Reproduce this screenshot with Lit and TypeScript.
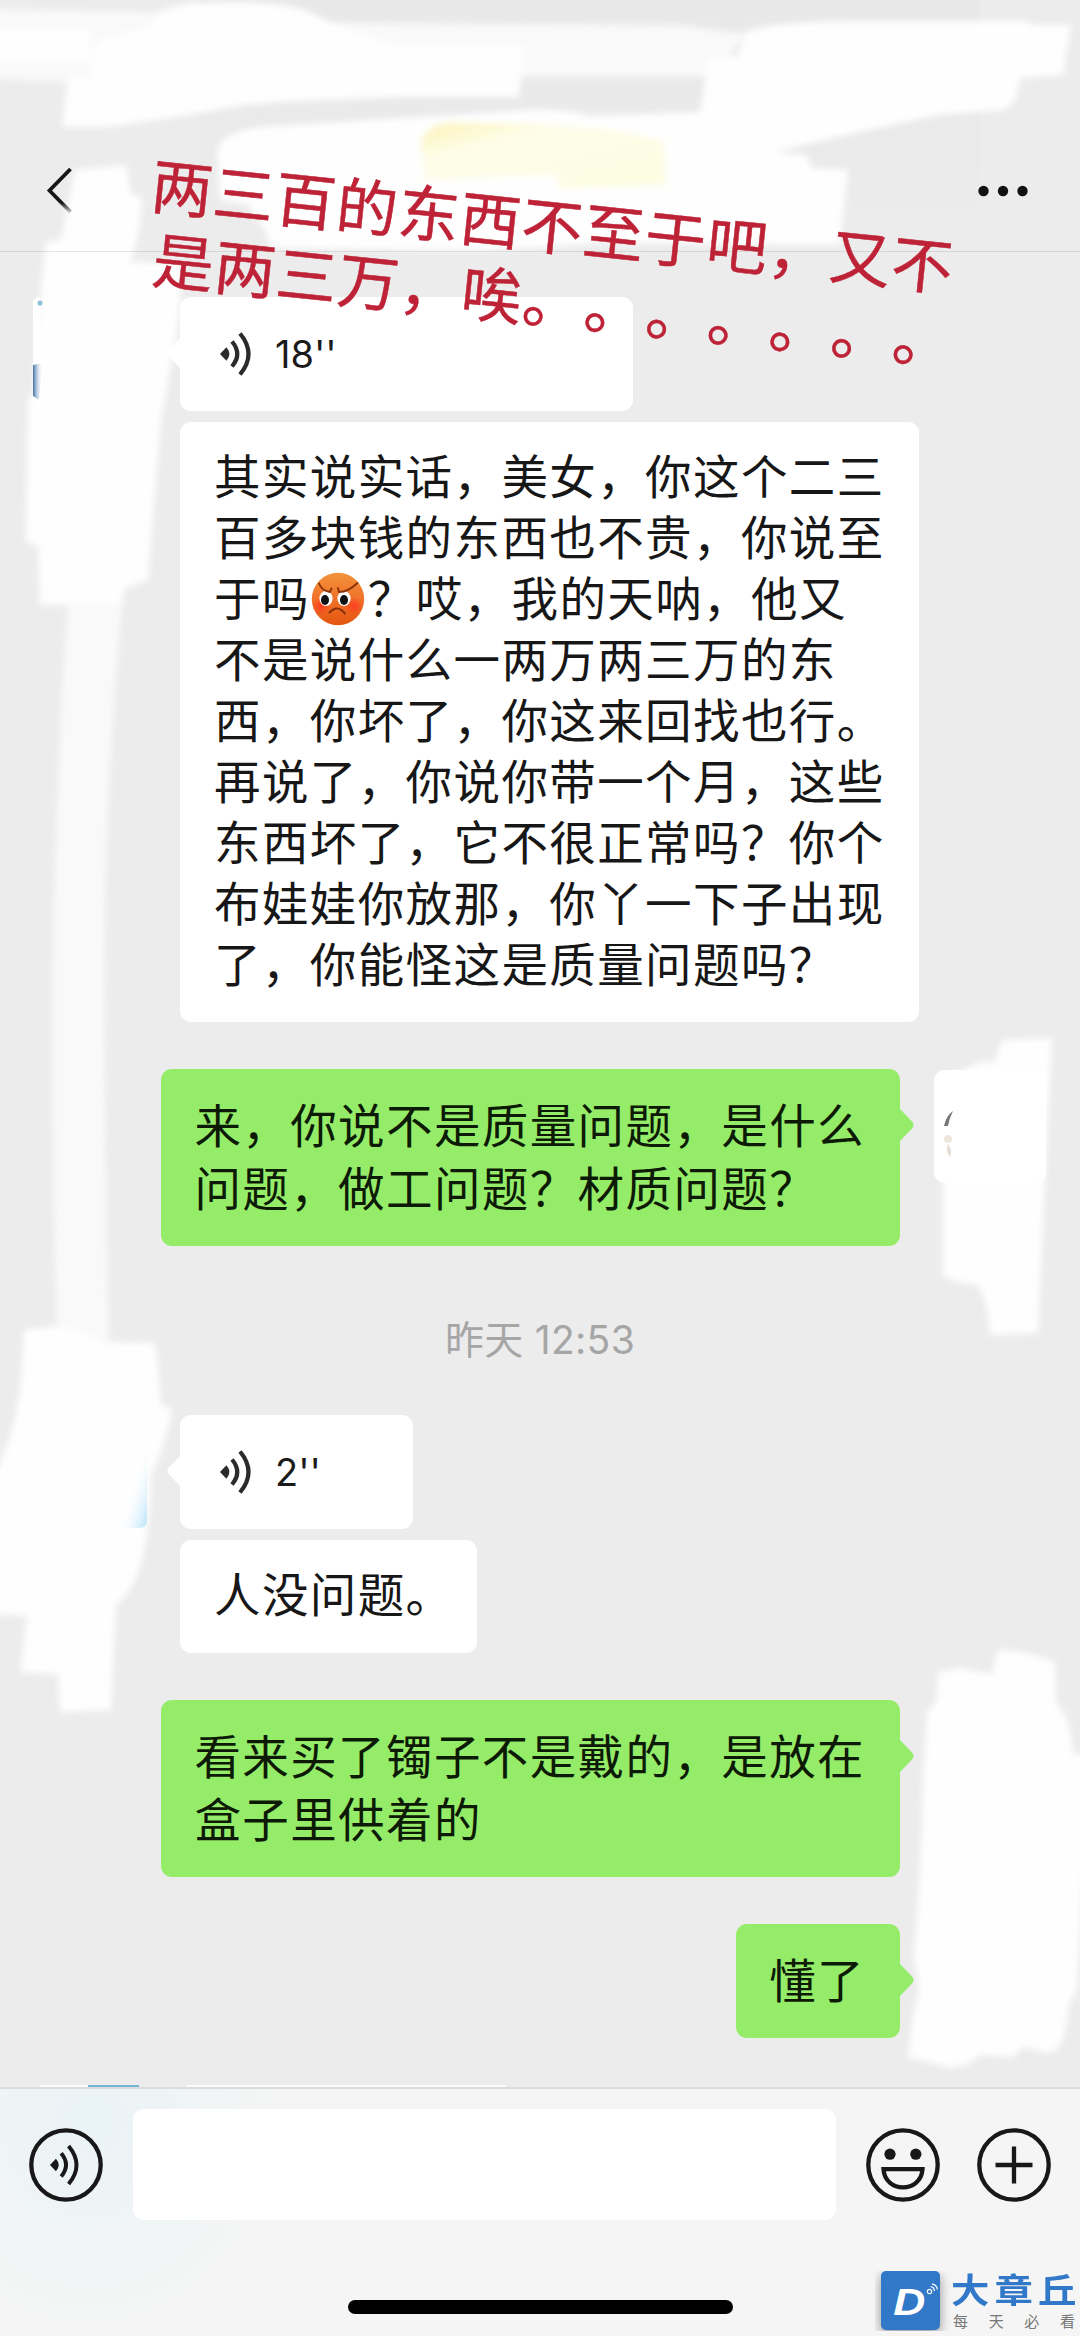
import { LitElement, html, css, svg, nothing } from "lit";
import { customElement, property } from "lit/decorators.js";

type Message =
  | { kind: "voice"; seconds: string; width: number; gap: number }
  | { kind: "text"; side: "in" | "out"; lines: string[]; gap: number; lead: number; tail?: boolean; avatar?: boolean; compact?: boolean }
  | { kind: "time"; label: string; gap: number };

const MESSAGES: Message[] = [
  { kind: "voice", seconds: "18''", width: 453, gap: 45 },
  {
    kind: "text", side: "in", gap: 11, lead: 61,
    lines: [
      "其实说实话，美女，你这个二三",
      "百多块钱的东西也不贵，你说至",
      "于吗[怒]？哎，我的天呐，他又",
      "不是说什么一两万两三万的东",
      "西，你坏了，你这来回找也行。",
      "再说了，你说你带一个月，这些",
      "东西坏了，它不很正常吗？你个",
      "布娃娃你放那，你丫一下子出现",
      "了，你能怪这是质量问题吗？",
    ],
  },
  { kind: "text", side: "out", gap: 47, lead: 63, tail: true, avatar: true, lines: ["来，你说不是质量问题，是什么", "问题，做工问题？材质问题？"] },
  { kind: "time", label: "昨天 12:53", gap: 62 },
  { kind: "voice", seconds: "2''", width: 233, gap: 43 },
  { kind: "text", side: "in", gap: 11, lead: 62, compact: true, lines: ["人没问题。"] },
  { kind: "text", side: "out", gap: 47, lead: 63, tail: true, lines: ["看来买了镯子不是戴的，是放在", "盒子里供着的"] },
  { kind: "text", side: "out", gap: 47, lead: 63, tail: true, lines: ["懂了"] },
];

const waves = svg`
  <path d="M0 22 L6.4 15.2 Q12.4 22 6.4 28.8 Z" fill="currentColor"/>
  <path d="M12 9.5 Q22.5 22 12 34.5" fill="none" stroke="currentColor" stroke-width="4.2"/>
  <path d="M20 1.5 Q37 22 20 42.5" fill="none" stroke="currentColor" stroke-width="4.2"/>`;

@customElement("angry-face")
class AngryFace extends LitElement {
  static styles = css`
    :host { display: inline-block; width: 58px; height: 54px; vertical-align: -10px; }
    svg { display: block; margin-left: 1px; }
  `;
  render() {
    return html`<svg width="54" height="54" viewBox="0 0 54 54">
      <defs>
        <linearGradient id="skin" x1="0" y1="0" x2="0" y2="1">
          <stop offset="0" stop-color="#f3923a"/><stop offset=".5" stop-color="#f0722a"/><stop offset="1" stop-color="#e4560f"/>
        </linearGradient>
        <radialGradient id="blush"><stop offset="0" stop-color="#ff3d22"/><stop offset="1" stop-color="#ff3d22" stop-opacity="0"/></radialGradient>
      </defs>
      <circle cx="27" cy="27" r="26.2" fill="url(#skin)"/>
      <circle cx="10" cy="34" r="9" fill="url(#blush)"/>
      <circle cx="43" cy="34" r="9" fill="url(#blush)"/>
      <ellipse cx="15" cy="26.5" rx="6.6" ry="7.6" fill="#fff"/>
      <ellipse cx="33" cy="26.5" rx="6.6" ry="7.6" fill="#fff"/>
      <ellipse cx="14" cy="28" rx="4" ry="5" fill="#111"/>
      <ellipse cx="33" cy="28" rx="4" ry="5" fill="#111"/>
      <path d="M8 11.5 Q11 19 19 20 M46.500 11 Q37 20 28 20 M19 20 L20.500 16.500 M28 20 L27 16" fill="none" stroke="#8a3207" stroke-width="1.900" stroke-linecap="round"/>
      <path d="M18.500 40.500 Q26 32 34 41.500" fill="none" stroke="#8a3207" stroke-width="2" stroke-linecap="round"/>
    </svg>`;
  }
}

@customElement("chat-message")
class ChatMessage extends LitElement {
  @property({ attribute: false }) data!: Message;

  static styles = css`
    :host { display: block; }
    .row { display: flex; padding: 0 34px 0 180px; }
    .row.out { justify-content: flex-end; align-items: flex-start; padding: 0 180px 0 34px; }
    .bubble { position: relative; box-sizing: border-box; flex: none; border-radius: 11px; background: #fff; color: #171717; }
    .row.out .bubble { background: #95ec69; color: #0c1a06; }
    .text { padding: 21px 34px 30px; font-size: 46.5px; letter-spacing: 1.4px; white-space: nowrap; }
    .out .text { padding: 22px 35px 29px 33px; }
    .text.compact { padding-right: 23px; }
    .voice { display: flex; align-items: center; gap: 23px; height: 114px; padding-left: 40px; font: 38px Inter, "Liberation Sans", sans-serif; color: #1a1a1a; }
    .voice svg { display: block; color: #2b2b2b; }
    .tail { position: absolute; top: 40px; right: -13.5px; }
    .tail.left { right: auto; left: -13.5px; transform: scaleX(-1); }
    .avatar { flex: none; width: 112px; height: 113px; border-radius: 10px; background: #fff; margin-left: 34px; margin-right: -146px; margin-top: 1px; overflow: hidden; }
    .avatar svg { display: block; }
    .time { text-align: center; font-size: 39px; line-height: 64px; letter-spacing: 0.3px; color: #a6a6a6; font-family: Inter, "Noto Sans CJK SC", sans-serif; }
  `;

  private tail(left = false) {
    return html`<svg class="tail ${left ? "left" : ""}" width="14" height="32" viewBox="0 0 14 32">
      <path d="M0 0 L12 12.500 Q15 16 12 19.500 L0 32 Z" fill=${left ? "#fff" : "#95ec69"}/></svg>`;
  }

  private line(text: string) {
    const parts = text.split("[怒]");
    return html`<div>${parts[0]}${parts.length > 1 ? html`<angry-face></angry-face>${parts[1]}` : nothing}</div>`;
  }

  render() {
    const m = this.data;
    if (m.kind === "time") return html`<div class="time">${m.label}</div>`;
    if (m.kind === "voice") {
      return html`<div class="row in"><div class="bubble voice" style="width:${m.width}px">
        ${this.tail(true)}<svg width="32" height="44" viewBox="0 0 32 44">${waves}</svg><span>${m.seconds}</span>
      </div></div>`;
    }
    return html`<div class="row ${m.side}">
      <div class="bubble text ${m.compact ? "compact" : ""}" style="line-height:${m.lead}px">${m.lines.map((l) => this.line(l))}${m.tail ? this.tail() : nothing}</div>
      ${m.avatar
        ? html`<div class="avatar"><svg width="114" height="114" viewBox="0 0 114 114">
            <path d="M10 56 Q12 46 19 41 Q15 49 14 56 Z" fill="#777"/>
            <circle cx="14" cy="69" r="4" fill="#efe6db"/><path d="M14 74 Q11 81 16 87 Q19 81 14 74 Z" fill="#e6ded6"/></svg></div>`
        : nothing}
    </div>`;
  }
}

@customElement("app-root")
class AppRoot extends LitElement {
  static styles = css`
    :host {
      display: flex; flex-direction: column; position: relative; box-sizing: border-box;
      width: 1080px; height: 2336px; overflow: hidden; background: #ececec;
      font-family: "Noto Sans CJK SC", sans-serif; text-spacing-trim: space-all;
    }
    .smears { position: absolute; inset: 0; }
    header {
      position: relative; box-sizing: border-box; height: 252px; padding: 130px 52px 0 46px;
      display: flex; justify-content: space-between; align-items: center;
      border-bottom: 1px solid rgba(0, 0, 0, 0.09);
    }
    header svg { display: block; }
    main { position: relative; flex: 1; }
    footer {
      position: relative; box-sizing: border-box; height: 249px; border-top: 2px solid #dcdcdc;
      background: radial-gradient(ellipse 200px 220px at 90px 30px, #eaf3f6, rgba(240, 245, 247, 0) 100%), #f5f5f5;
    }
    .tools { display: flex; align-items: center; padding: 20px 29.5px 0 29px; }
    .tools svg { display: block; color: #181818; }
    .field { flex: 1; height: 111px; margin: 0 29.5px 0 30px; background: #fff; border-radius: 11px; }
    .smile { margin-right: 37px; }
    .home { width: 385px; height: 14px; border-radius: 7px; background: #000; margin: 80px auto 0; }
    .note {
      position: absolute; left: 156px; top: 145px; transform-origin: 0 0; transform: rotate(5.93deg);
      font-size: 61px; letter-spacing: 1px; line-height: 74px; color: #be2236; white-space: nowrap;
      -webkit-text-stroke: 0.5px #be2236;
    }
    .second { padding-left: 9px; }
    .mark { position: absolute; right: 0; bottom: 0; display: flex; height: 65px; width: 205px; }
    .tile {
      flex: none; display: flex; align-items: center; justify-content: center; position: relative;
      width: 59px; height: 59px; margin-left: 6px; border-radius: 5px; background: #3178c8; color: #fff;
      box-shadow: 0 4px 12px rgba(0, 0, 0, 0.4); clip-path: inset(0 -18px -1px -6px);
      font: italic bold 37px "Liberation Sans", sans-serif;
    }
    .tile span { transform: translate(-1px, 2px) scaleX(1.2); }
    .tile svg { position: absolute; right: 2px; top: 12px; }
    .words { flex: none; margin-left: 11px; font-family: "Liberation Sans", "Noto Sans CJK SC", sans-serif; }
    .name { display: flex; gap: 4.5px; width: 111px; font-size: 34px; line-height: 41px; font-weight: bold; color: #3178c8; transform: scaleX(1.13); transform-origin: 0 0; }
    .sub { display: flex; justify-content: space-between; width: 122px; font-size: 15px; line-height: 19px; color: #777; padding-left: 2px; }
  `;

  render() {
    return html`
      <svg class="smears" width="1080" height="2336" viewBox="0 0 1080 2336">
        <defs>
          <filter id="soft" x="-10%" y="-10%" width="120%" height="120%"><feGaussianBlur stdDeviation="3"/></filter>
          <linearGradient id="top" x1="0" y1="0" x2="0" y2="1"><stop offset="0" stop-color="#e8e8e8"/><stop offset="1" stop-color="#ececec"/></linearGradient>
          <linearGradient id="navy"><stop offset="0" stop-color="#3f72a6"/><stop offset="1" stop-color="#fff" stop-opacity="0"/></linearGradient>
          <linearGradient id="sky" x1="0" y1="0" x2="1" y2="1"><stop offset=".4" stop-color="#fff" stop-opacity="0"/><stop offset="1" stop-color="#b5e3fb"/></linearGradient>
          <linearGradient id="gold" x1="0" y1="0" x2="1" y2="1"><stop offset="0" stop-color="#fcf3b8"/><stop offset=".3" stop-color="#fefde8"/><stop offset="1" stop-color="#fdfde2"/></linearGradient>
        </defs>
        <rect x="200" width="780" height="250" fill="url(#top)"/>
        <g filter="url(#soft)" fill="#fefefe">
          <path fill="#f9f9f9" d="M-9 9 L150 12 L350 23 L680 25 L745 34 L715 77 L525 77 L65 82 L-9 79 Z"/>
          <path d="M-9 28 L90 30 L90 62 L-9 60 Z"/>
          <path d="M95 42 L150 26 Q155 5 200 3 Q265 -1 305 10 Q350 34 400 46 L525 46 L519 97 L400 97 L330 100 Q280 101 240 106 Q160 120 105 127 L62 127 L68 78 L90 76 Z"/>
          <path d="M745 32 Q770 22 850 21 L1025 21 L1034 25 L1071 25 L1063 75 L1020 78 Q1018 108 1000 110 L940 115 Q860 131 775 152 L806 155 L812 168 L848 170 L840 245 L600 243 Q500 252 420 250 L270 248 L265 230 L248 205 L220 200 L217 150 Q222 132 260 127 Q400 118 500 112 Q560 106 590 116 L700 112 L708 60 L738 55 Z"/>
          <path fill="#f9f9f9" d="M38 605 L68 590 L124 590 Q110 720 105 900 Q103 1080 109 1340 L57 1340 Q50 1080 54 900 Q60 700 68 605 Z"/>
          <path d="M75 170 L127 165 L130 193 L142 198 Q141 235 130 262 L182 263 Q180 330 172 360 Q164 400 160 430 L148 580 L125 588 L122 603 L40 605 L38 545 L26 543 L28 400 L34 390 L40 300 L46 242 L61 240 Z"/>
          <path d="M24 1330 L60 1326 L108 1342 L155 1343 L158 1368 L161 1405 L172 1408 Q168 1440 151 1475 Q150 1580 116 1605 L111 1710 L60 1712 L58 1674 L20 1672 L27 1616 L-9 1614 L-9 1480 Q20 1430 22 1360 Z"/>
          <path d="M1002 1040 L1052 1038 L1045 1180 L1038 1333 L990 1335 L986 1303 L978 1285 Q960 1284 943 1276 L943 1080 L980 1062 L995 1062 Z"/>
          <path d="M998 1650 Q1025 1650 1055 1662 L1056 1703 Q1066 1712 1070 1730 L1073 1753 L1090 1755 L1077 1990 L1068 2006 Q1066 2050 1050 2053 L1022 2047 L1014 2057 L980 2055 L968 2064 L950 2068 L908 2057 Q911 2020 919 1990 L914 1955 Q922 1860 923 1780 L927 1712 L937 1700 L938 1672 L960 1668 L992 1674 Z"/>
        </g>
        <path filter="url(#soft)" fill="url(#gold)" d="M421 140 Q432 123 450 123 L540 124 Q620 128 664 142 L666 185 L560 188 L555 174 L425 180 Z"/>
        <path d="M33 303 Q33 297 40 297 L44 410 L33 398 Z" fill="#fff"/>
        <path d="M33 365 L43 363 L39 400 L33 396 Z" fill="url(#navy)"/>
        <circle cx="40" cy="303" r="2.500" fill="#8fbfd8"/>
        <path d="M122 1450 H147 V1520 Q147 1528 139 1528 H122 Z" fill="url(#sky)"/>
        <path d="M40 2085 H88 V2088 H40 Z M186 2085 H506 V2088 H186 Z" fill="#fafafa"/>
        <path d="M88 2085 H139 V2088 H88 Z" fill="#76b4d4"/>
      </svg>

      <header>
        <svg width="28" height="50" viewBox="0 0 28 50">
          <defs><linearGradient id="fade" x1="0" y1="0" x2="0" y2="1"><stop offset=".78" stop-color="#161616"/><stop offset="1" stop-color="#c4c4c4"/></linearGradient></defs>
          <path d="M24.500 4 L3.500 25.500 L24.500 47" transform="translate(0 -1)" fill="none" stroke="url(#fade)" stroke-width="3.800"/>
        </svg>
        <svg width="50" height="12" viewBox="0 0 50 12"><circle cx="5.500" cy="6" r="5.200" fill="#111"/><circle cx="25" cy="6" r="5.200" fill="#111"/><circle cx="44.500" cy="6" r="5.200" fill="#111"/></svg>
      </header>

      <main>
        ${MESSAGES.map((m) => html`<chat-message style="padding-top:${m.gap}px" .data=${m}></chat-message>`)}
      </main>

      <footer>
        <div class="tools">
          <svg width="74" height="74" viewBox="0 0 74 74">
            <circle cx="37" cy="37" r="34.700" fill="none" stroke="currentColor" stroke-width="4.300"/>
            <g transform="translate(21 16.500) scale(.93)">${waves}</g>
          </svg>
          <div class="field"></div>
          <svg class="smile" width="74" height="74" viewBox="0 0 74 74">
            <circle cx="37" cy="37" r="34.700" fill="none" stroke="currentColor" stroke-width="4.300"/>
            <circle cx="24" cy="26.200" r="5.600" fill="currentColor"/><circle cx="49.800" cy="26.200" r="5.600" fill="currentColor"/>
            <path d="M17.500 41.200 H56.500 C55 65.500 19 65.500 17.500 41.200 Z" fill="none" stroke="currentColor" stroke-width="4.300"/>
          </svg>
          <svg width="74" height="74" viewBox="0 0 74 74">
            <circle cx="37" cy="37" r="34.700" fill="none" stroke="currentColor" stroke-width="4.300"/>
            <path d="M18.500 37 H55.500 M37 18.500 V55.500" stroke="currentColor" stroke-width="4.300"/>
          </svg>
        </div>
        <div class="home"></div>
      </footer>

      <div class="note"><div>两三百的东西不至于吧，又不</div><div class="second">是两三万，唉。。。。。。。</div></div>

      <div class="mark">
        <div class="tile"><span>D</span>
          <svg width="12" height="12" viewBox="0 0 12 12" fill="none" stroke="#fff" stroke-width="1.200"><circle cx="3.500" cy="8.500" r="2.200"/><path d="M4.500 3.500 Q8 4 8.500 8 M6 .8 Q11 2 11.300 6.500"/></svg>
        </div>
        <div class="words">
          <div class="name">${[..."大章丘"].map((c) => html`<span>${c}</span>`)}</div>
          <div class="sub">${[..."每天必看"].map((c) => html`<span>${c}</span>`)}</div>
        </div>
      </div>
    `;
  }
}
